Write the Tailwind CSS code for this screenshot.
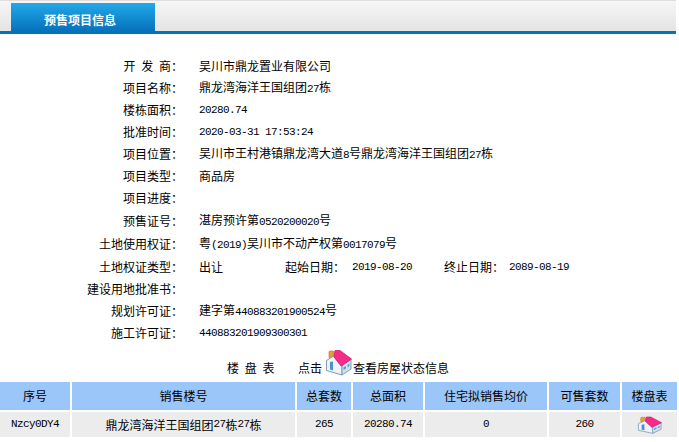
<!DOCTYPE html>
<html lang="zh-CN">
<head>
    <meta charset="UTF-8">
    <title>预售项目信息</title>
    <script src="https://cdn.jsdelivr.net/npm/@tailwindcss/browser@4"></script>
</head>
<body class="bg-white w-[679px] h-[442px] overflow-hidden text-[12px] text-black font-['Noto_Sans_CJK_SC','Liberation_Sans',sans-serif]">
    <svg width="0" height="0" class="absolute">
        <symbol id="house" viewBox="0 0 27 27" preserveAspectRatio="none">
            <rect x="4" y="2" width="5" height="7" rx="1" fill="#ee9c2e" stroke="#b9772a" stroke-width="0.6"/>
            <path d="M1.5 11.5 L8.5 7 L17 17 L17 26 L1.5 21.5 Z" fill="#eef3f7" stroke="#7f9bb0"/>
            <path d="M17 17 L26 10 L26 20 L17 26 Z" fill="#d5e2ec" stroke="#7f9bb0"/>
            <path d="M10 1.5 L15 1.5 L26.5 10 L16 17 L9 8 Z" fill="#f42b88" stroke="#d61c72" stroke-width="0.8"/>
            <path d="M5 13 L8 12.5 L8 21.5 L5 20.5 Z" fill="#4b8fd2"/>
            <path d="M18.5 18.5 L21 17 L21 19.5 L18.5 21 Z" fill="#4aa3e6"/>
            <path d="M22.5 16 L24.5 14.5 L24.5 17 L22.5 18.5 Z" fill="#4aa3e6"/>
        </symbol>
    </svg>

    <div class="w-[676px] h-[34px] flex border-t border-[#dedede] border-b-[3px] border-b-[#0573bc] bg-gradient-to-b from-[#f6f6f6] to-[#e4e4e4] pt-[2px] pl-[11px]">
        <div class="w-[144px] h-[28px] bg-gradient-to-b from-[#22a9e9] to-[#0672bb] text-white font-bold text-[12px] flex items-center justify-center pt-[5px] pr-[6px]">预售项目信息</div>
    </div>

    <div class="pt-[21px] flex flex-col">
        <div class="flex h-[22px] items-center"><span class="w-[183px] text-right [word-spacing:3px]">开 发 商：</span><span class="ml-[16px]">吴川市鼎龙置业有限公司</span></div>
        <div class="flex h-[22px] items-center"><span class="w-[183px] text-right">项目名称：</span><span class="ml-[16px]">鼎龙湾海洋王国组团<span class="font-['Liberation_Mono'] text-[11px] tracking-[-0.6px]">27</span>栋</span></div>
        <div class="flex h-[22px] items-center"><span class="w-[183px] text-right">楼栋面积：</span><span class="ml-[16px] font-['Liberation_Mono'] text-[11px] tracking-[-0.6px]">20280.74</span></div>
        <div class="flex h-[22px] items-center"><span class="w-[183px] text-right">批准时间：</span><span class="ml-[16px] font-['Liberation_Mono'] text-[11px] tracking-[-0.6px]">2020-03-31 17:53:24</span></div>
        <div class="flex h-[22px] items-center"><span class="w-[183px] text-right">项目位置：</span><span class="ml-[16px]">吴川市王村港镇鼎龙湾大道<span class="font-['Liberation_Mono'] text-[11px] tracking-[-0.6px]">8</span>号鼎龙湾海洋王国组团<span class="font-['Liberation_Mono'] text-[11px] tracking-[-0.6px]">27</span>栋</span></div>
        <div class="flex h-[22px] items-center"><span class="w-[183px] text-right">项目类型：</span><span class="ml-[16px]">商品房</span></div>
        <div class="flex h-[22px] items-center"><span class="w-[183px] text-right">项目进度：</span></div>
        <div class="flex h-[23px] items-center"><span class="w-[183px] text-right">预售证号：</span><span class="ml-[16px]">湛房预许第<span class="font-['Liberation_Mono'] text-[11px] tracking-[-0.6px]">0520200020</span>号</span></div>
        <div class="flex h-[24px] items-center"><span class="w-[183px] text-right">土地使用权证：</span><span class="ml-[16px]">粤<span class="font-['Liberation_Mono'] text-[11px] tracking-[-0.6px]">(2019)</span>吴川市不动产权第<span class="font-['Liberation_Mono'] text-[11px] tracking-[-0.6px]">0017079</span>号</span></div>
        <div class="flex h-[22px] items-center">
            <span class="w-[183px] text-right">土地权证类型：</span><span class="ml-[16px] w-[86px]">出让</span>
            <span class="w-[67px]">起始日期：</span><span class="w-[92px] font-['Liberation_Mono'] text-[11px] tracking-[-0.6px]">2019-08-20</span>
            <span class="w-[65px]">终止日期：</span><span class="font-['Liberation_Mono'] text-[11px] tracking-[-0.6px]">2089-08-19</span>
        </div>
        <div class="flex h-[22px] items-center"><span class="w-[183px] text-right">建设用地批准书：</span></div>
        <div class="flex h-[22px] items-center"><span class="w-[183px] text-right">规划许可证：</span><span class="ml-[16px]">建字第<span class="font-['Liberation_Mono'] text-[11px] tracking-[-0.6px]">440883201900524</span>号</span></div>
        <div class="flex h-[22px] items-center"><span class="w-[183px] text-right">施工许可证：</span><span class="ml-[16px] font-['Liberation_Mono'] text-[11px] tracking-[-0.6px]">440883201909300301</span></div>
    </div>

    <div class="h-[36px] pl-[227px] flex items-end pb-[5px] mt-[2px]">
        <span class="w-[71px] [word-spacing:3px]">楼 盘 表</span><span>点击</span>
        <svg class="w-[27px] h-[27px] ml-[3px] mb-[1px] shrink-0"><use href="#house"/></svg>
        <span class="ml-[1px]">查看房屋状态信息</span>
    </div>

    <div class="grid grid-cols-[70px_223px_54px_70px_122px_71px_55px] gap-[2px] w-[677px]">
        <div class="h-[28px] bg-[#9bc6fa] flex items-center justify-center">序号</div>
        <div class="h-[28px] bg-[#9bc6fa] flex items-center justify-center">销售楼号</div>
        <div class="h-[28px] bg-[#9bc6fa] flex items-center justify-center">总套数</div>
        <div class="h-[28px] bg-[#9bc6fa] flex items-center justify-center">总面积</div>
        <div class="h-[28px] bg-[#9bc6fa] flex items-center justify-center">住宅拟销售均价</div>
        <div class="h-[28px] bg-[#9bc6fa] flex items-center justify-center">可售套数</div>
        <div class="h-[28px] bg-[#9bc6fa] flex items-center justify-center">楼盘表</div>
        <div class="h-[25px] bg-[#ececec] flex items-center justify-center font-['Liberation_Mono'] text-[11px] tracking-[-0.6px]">Nzcy0DY4</div>
        <div class="h-[25px] bg-[#ececec] flex items-center justify-center">鼎龙湾海洋王国组团<span class="font-['Liberation_Mono'] text-[11px] tracking-[-0.6px]">27</span>栋<span class="font-['Liberation_Mono'] text-[11px] tracking-[-0.6px]">27</span>栋</div>
        <div class="h-[25px] bg-[#ececec] flex items-center justify-center font-['Liberation_Mono'] text-[11px] tracking-[-0.6px]">265</div>
        <div class="h-[25px] bg-[#ececec] flex items-center justify-center font-['Liberation_Mono'] text-[11px] tracking-[-0.6px]">20280.74</div>
        <div class="h-[25px] bg-[#ececec] flex items-center justify-center font-['Liberation_Mono'] text-[11px] tracking-[-0.6px]">0</div>
        <div class="h-[25px] bg-[#ececec] flex items-center justify-center font-['Liberation_Mono'] text-[11px] tracking-[-0.6px]">260</div>
        <div class="h-[25px] bg-[#ececec] flex items-center justify-center pr-[1px]"><svg class="w-[25px] h-[18px]"><use href="#house"/></svg></div>
    </div>
</body>
</html>
